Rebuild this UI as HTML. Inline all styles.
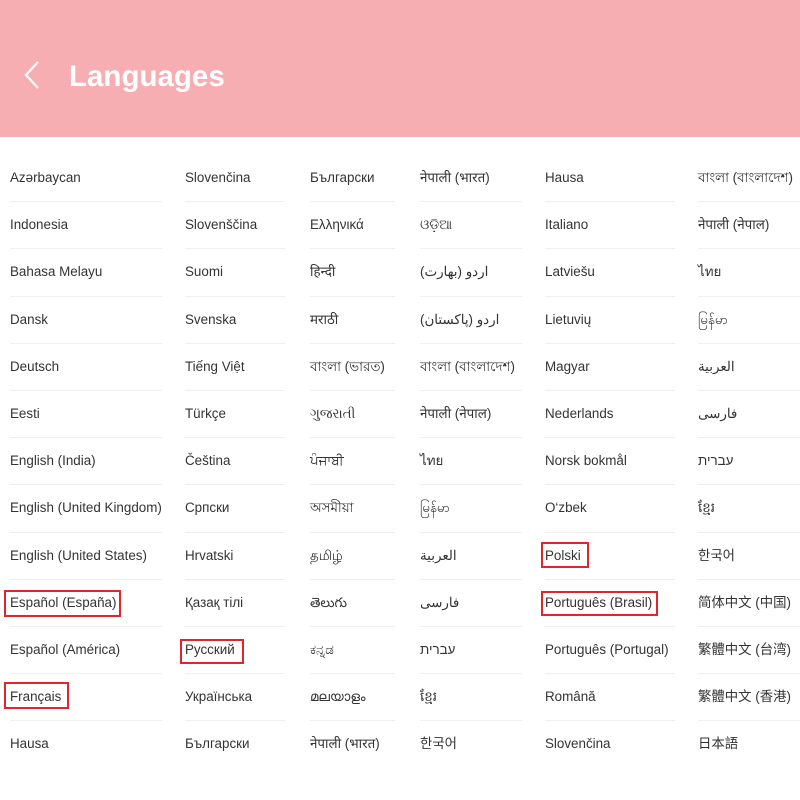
<!DOCTYPE html>
<html><head><meta charset="utf-8"><style>
*{margin:0;padding:0;box-sizing:border-box}
body{width:800px;height:800px;background:#fff;position:relative;overflow:hidden;font-family:"Liberation Sans","Noto Sans CJK SC",sans-serif;color:#333;font-size:13.4px}
.hdr{position:absolute;left:0;top:0;width:800px;height:137px;background:#f7aeb3}
.hdr h1{position:absolute;left:69px;top:57px;font-size:29.5px;font-weight:bold;color:#fff;line-height:40px}
.col{position:absolute;top:155px}
.it{height:47.2px;border-bottom:1px solid #efefef;line-height:46px;white-space:nowrap;position:relative}
.it:last-child{border-bottom:none}
.box{position:absolute;border:2px solid #e0262c}
</style></head><body>
<div class="hdr">
<svg style="position:absolute;left:22px;top:60px" width="22" height="30" viewBox="0 0 22 30"><path d="M16 2 L4 15 L16 28" fill="none" stroke="#fff" stroke-width="2.2"/></svg>
<h1>Languages</h1>
</div>
<div class="col" style="left:10px;width:152px">
<div class="it">Azərbaycan</div><div class="it">Indonesia</div><div class="it">Bahasa Melayu</div><div class="it">Dansk</div><div class="it">Deutsch</div><div class="it">Eesti</div><div class="it">English (India)</div><div class="it">English (United Kingdom)</div><div class="it">English (United States)</div><div class="it">Español (España)</div><div class="it">Español (América)</div><div class="it">Français</div><div class="it">Hausa</div>
</div>
<div class="col" style="left:185px;width:100px">
<div class="it">Slovenčina</div><div class="it">Slovenščina</div><div class="it">Suomi</div><div class="it">Svenska</div><div class="it">Tiếng Việt</div><div class="it">Türkçe</div><div class="it">Čeština</div><div class="it">Српски</div><div class="it">Hrvatski</div><div class="it">Қазақ тілі</div><div class="it">Русский</div><div class="it">Українська</div><div class="it">Български</div>
</div>
<div class="col" style="left:310px;width:85px">
<div class="it">Български</div><div class="it">Ελληνικά</div><div class="it">हिन्दी</div><div class="it">मराठी</div><div class="it">বাংলা (ভারত)</div><div class="it">ગુજરાતી</div><div class="it">ਪੰਜਾਬੀ</div><div class="it">অসমীয়া</div><div class="it">தமிழ்</div><div class="it">తెలుగు</div><div class="it">ಕನ್ನಡ</div><div class="it">മലയാളം</div><div class="it">नेपाली (भारत)</div>
</div>
<div class="col" style="left:420px;width:102px">
<div class="it">नेपाली (भारत)</div><div class="it">ଓଡ଼ିଆ</div><div class="it">اردو (بھارت)</div><div class="it">اردو (پاکستان)</div><div class="it">বাংলা (বাংলাদেশ)</div><div class="it">नेपाली (नेपाल)</div><div class="it">ไทย</div><div class="it">မြန်မာ</div><div class="it">العربية</div><div class="it">فارسی</div><div class="it">עברית</div><div class="it">ខ្មែរ</div><div class="it">한국어</div>
</div>
<div class="col" style="left:545px;width:130px">
<div class="it">Hausa</div><div class="it">Italiano</div><div class="it">Latviešu</div><div class="it">Lietuvių</div><div class="it">Magyar</div><div class="it">Nederlands</div><div class="it">Norsk bokmål</div><div class="it">O‘zbek</div><div class="it">Polski</div><div class="it">Português (Brasil)</div><div class="it">Português (Portugal)</div><div class="it">Română</div><div class="it">Slovenčina</div>
</div>
<div class="col" style="left:698px;width:102px">
<div class="it">বাংলা (বাংলাদেশ)</div><div class="it">नेपाली (नेपाल)</div><div class="it">ไทย</div><div class="it">မြန်မာ</div><div class="it">العربية</div><div class="it">فارسی</div><div class="it">עברית</div><div class="it">ខ្មែរ</div><div class="it">한국어</div><div class="it">简体中文 (中国)</div><div class="it">繁體中文 (台湾)</div><div class="it">繁體中文 (香港)</div><div class="it">日本語</div>
</div>
<div class="box" style="left:4px;top:590px;width:117px;height:27px"></div>
<div class="box" style="left:180px;top:639px;width:64px;height:25px"></div>
<div class="box" style="left:4px;top:682px;width:65px;height:27px"></div>
<div class="box" style="left:541px;top:542px;width:48px;height:26px"></div>
<div class="box" style="left:541px;top:591px;width:117px;height:25px"></div>
</body></html>
